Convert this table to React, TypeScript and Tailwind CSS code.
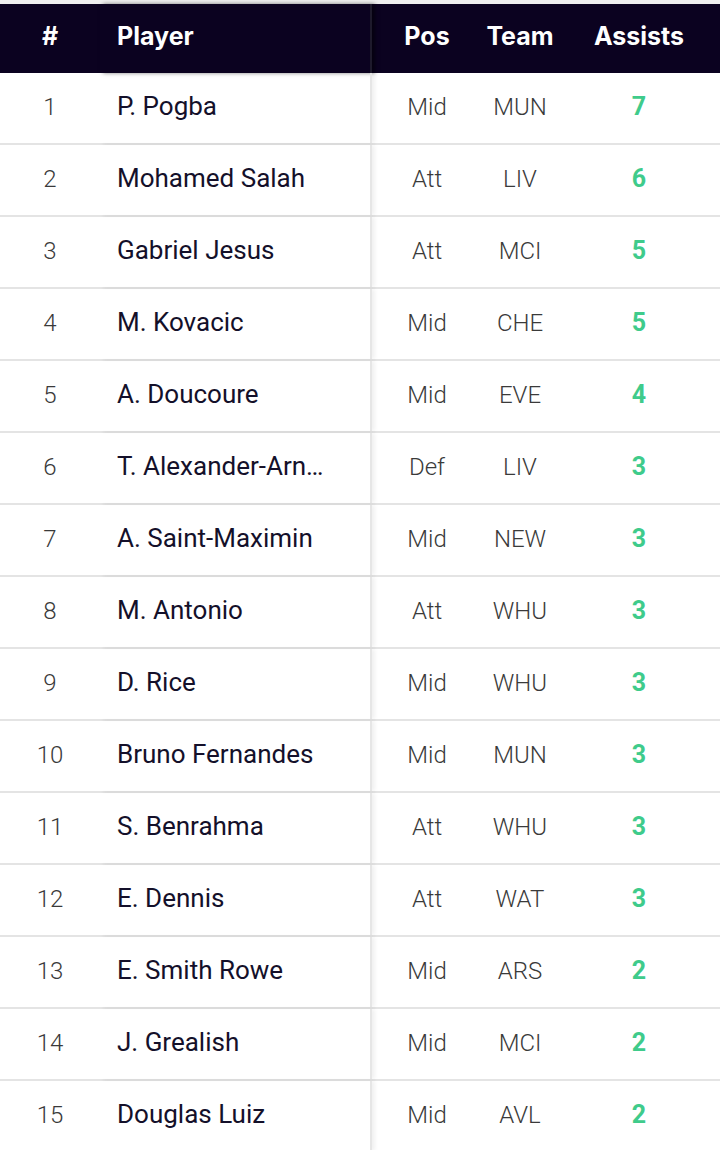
import React from "react";

const rows: [number, string, string, string, number][] = [
  [1, "P. Pogba", "Mid", "MUN", 7],
  [2, "Mohamed Salah", "Att", "LIV", 6],
  [3, "Gabriel Jesus", "Att", "MCI", 5],
  [4, "M. Kovacic", "Mid", "CHE", 5],
  [5, "A. Doucoure", "Mid", "EVE", 4],
  [6, "T. Alexander-Arn…", "Def", "LIV", 3],
  [7, "A. Saint-Maximin", "Mid", "NEW", 3],
  [8, "M. Antonio", "Att", "WHU", 3],
  [9, "D. Rice", "Mid", "WHU", 3],
  [10, "Bruno Fernandes", "Mid", "MUN", 3],
  [11, "S. Benrahma", "Att", "WHU", 3],
  [12, "E. Dennis", "Att", "WAT", 3],
  [13, "E. Smith Rowe", "Mid", "ARS", 2],
  [14, "J. Grealish", "Mid", "MCI", 2],
  [15, "Douglas Luiz", "Mid", "AVL", 2],
];

export default function App() {
  return (
    <div className="w-[720px] h-[1150px] overflow-hidden bg-white">
      <div className="h-[4px] bg-[#efefef]" />
      <div
        className="grid grid-cols-[100px_272px_110px_76px_1fr] h-[69px] bg-[#0b0220] text-white text-[25px] font-bold items-center"
        style={{ fontFamily: "Inter, 'Noto Sans', sans-serif" }}
      >
        <div className="text-center pb-[3px]">#</div>
        <div className="h-full flex items-center pl-[17px] pb-[3px] border-r-2 border-[#1e1a2c] shadow-[3px_0_4px_rgba(0,0,0,0.5)]">
          Player
        </div>
        <div className="text-center pb-[3px]">Pos</div>
        <div className="text-center pb-[3px]">Team</div>
        <div className="text-center pb-[3px]">Assists</div>
      </div>
      {rows.map(([n, name, pos, team, a]) => (
        <div
          key={n}
          className="grid grid-cols-[100px_272px_110px_76px_1fr] h-[72px] border-b-2 border-[#e4e4e4] items-center text-[24px]"
          style={{ fontFamily: "Roboto, 'Liberation Sans', sans-serif" }}
        >
          <div className="text-center font-light text-[#3a3a3a] pb-[3px]">{n}</div>
          <div className="h-full flex items-center pl-[17px] pb-[3px] text-[26px] text-[#14102a] border-r-2 border-[#e6e6e6] shadow-[3px_0_4px_rgba(0,0,0,0.06)] whitespace-nowrap">
            {name}
          </div>
          <div className="text-center font-light text-[#3a3a3a] pb-[3px]">{pos}</div>
          <div className="text-center font-light text-[#3a3a3a] pb-[3px]">{team}</div>
          <div className="text-center font-bold text-[#3fcb8b] text-[25px] pb-[3px]">{a}</div>
        </div>
      ))}
    </div>
  );
}
